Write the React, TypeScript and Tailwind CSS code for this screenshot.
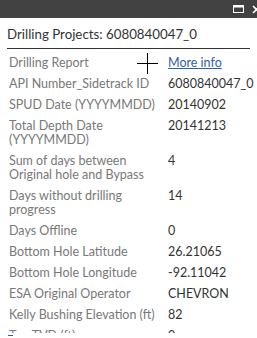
const rows: { label: string; value: string; link?: boolean }[] = [
  { label: "Drilling Report", value: "More info", link: true },
  { label: "API Number_Sidetrack ID", value: "6080840047_0" },
  { label: "SPUD Date (YYYYMMDD)", value: "20140902" },
  { label: "Total Depth Date (YYYYMMDD)", value: "20141213" },
  { label: "Sum of days between Original hole and Bypass", value: "4" },
  { label: "Days without drilling progress", value: "14" },
  { label: "Days Offline", value: "0" },
  { label: "Bottom Hole Latitude", value: "26.21065" },
  { label: "Bottom Hole Longitude", value: "-92.11042" },
  { label: "ESA Original Operator", value: "CHEVRON" },
  { label: "Kelly Bushing Elevation (ft)", value: "82" },
  { label: "Top TVD (ft)", value: "0" },
];

export default function App() {
  return (
    <div className="relative w-[257px] h-[338px] overflow-hidden bg-white font-['Lato',sans-serif]">
      <div className="h-[18px] bg-[#424242] flex items-center justify-end gap-[8px]">
        <svg width="11" height="8" viewBox="0 0 11 8">
          <rect x="0.5" y="0.5" width="10" height="7" fill="none" stroke="#fff" strokeWidth="1" />
          <rect x="0.5" y="0.5" width="10" height="2" fill="#fff" />
        </svg>
        <svg width="5" height="9" viewBox="0 0 5 9">
          <path d="M1 1 L8 8 M8 1 L1 8" stroke="#fff" strokeWidth="1.6" />
        </svg>
      </div>

      <div className="px-[7px]">
        <div className="pt-[8px] pb-[5px] text-[13.3px] text-[#333] border-b border-[#333] leading-[17px]">
          Drilling Projects: 6080840047_0
        </div>
      </div>

      <div className="h-[284px] overflow-hidden pt-[7px] pl-[7px]">
        <table className="text-[12.5px] leading-[14px] border-separate border-spacing-0">
          <tbody>
            {rows.map((r) => (
              <tr key={r.label}>
                <td className="w-[161px] pl-[2px] pr-[6px] pb-[7px] align-top text-[#787878]">{r.label}</td>
                <td className="pb-[7px] align-top text-[#333] whitespace-nowrap">
                  {r.link ? (
                    <span className="text-[#2f5fa8] underline">{r.value}</span>
                  ) : (
                    r.value
                  )}
                </td>
              </tr>
            ))}
          </tbody>
        </table>
      </div>

      <div className="ml-[8px] mt-[2px] w-[5px] h-[1px] bg-[#2f5fa8]" />

      <svg className="absolute left-[137px] top-[53px]" width="21" height="21" viewBox="0 0 21 21">
        <path d="M10.5 0 V21 M0 10.5 H21" stroke="#000" strokeWidth="1" />
      </svg>
    </div>
  );
}
